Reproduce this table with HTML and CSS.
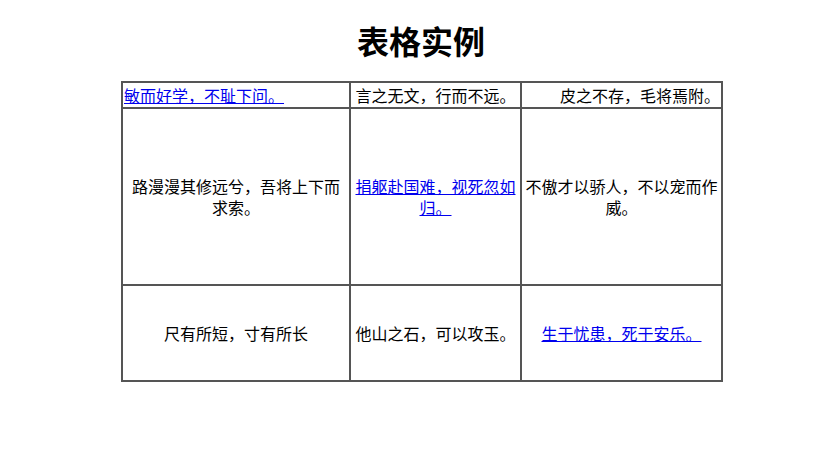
FILE: index.html
```html
<!DOCTYPE html>
<html lang="zh">
<head>
<meta charset="utf-8">
<title>表格实例</title>
<link rel="stylesheet" href="styles.css">
</head>
<body>
<div class="page">
  <h1 class="title">表格实例</h1>
  <table class="grid">
    <colgroup>
      <col class="c1">
      <col class="c2">
      <col class="c3">
    </colgroup>
    <tr class="r1">
      <td class="left"><a href="#">敏而好学，不耻下问。</a></td>
      <td class="center">言之无文，行而不远。</td>
      <td class="right">皮之不存，毛将焉附。</td>
    </tr>
    <tr class="r2">
      <td class="center">路漫漫其修远兮，吾将上下而求索。</td>
      <td class="center"><a href="#">捐躯赴国难，视死忽如归。</a></td>
      <td class="center">不傲才以骄人，不以宠而作威。</td>
    </tr>
    <tr class="r3">
      <td class="center">尺有所短，寸有所长</td>
      <td class="center">他山之石，可以攻玉。</td>
      <td class="center"><a href="#">生于忧患，死于安乐。</a></td>
    </tr>
  </table>
</div>
</body>
</html>
```

FILE: styles.css
```css
html, body {
  margin: 0;
  padding: 0;
  background: #fff;
}
body {
  font-family: "Noto Sans CJK SC", "Liberation Sans", sans-serif;
  color: #000;
}
.page {
  width: 600px;
  margin-left: 121px;
  padding-top: 20px;
}
.title {
  margin: 0 0 21px 0;
  font-size: 32px;
  line-height: 40px;
  font-weight: bold;
  text-align: center;
}
.grid {
  width: 600px;
  table-layout: fixed;
  border-collapse: collapse;
  border: 2px solid #555;
  font-size: 16px;
  line-height: 21px;
}
.c1 { width: 228px; }
.c2 { width: 171px; }
.c3 { width: 201px; }
.grid td {
  border: 2px solid #555;
  padding: 1px 2px;
  vertical-align: middle;
}
.r1 td { height: 22px; }
.r2 td { height: 173px; }
.r3 td { height: 92px; }
.left { text-align: left; }
.center { text-align: center; }
.right { text-align: right; }
.grid a {
  color: #0000ee;
  text-decoration: underline;
}
.r1 .left { padding-left: 1px; }
.r1 .right { padding-right: 1px; }
```
